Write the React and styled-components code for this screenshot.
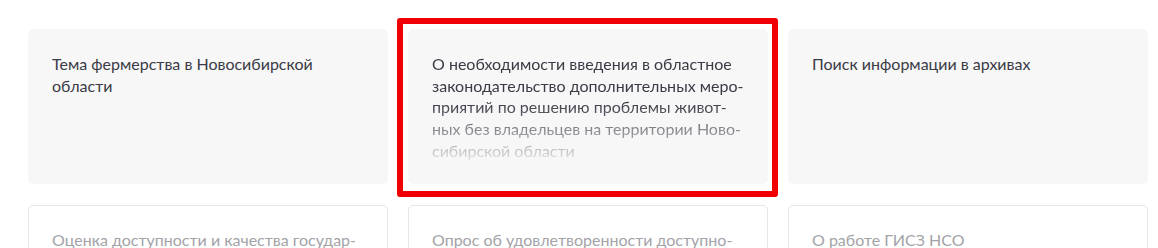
import React from "react";
import styled, { createGlobalStyle, css } from "styled-components";

const GlobalStyle = createGlobalStyle`
  html, body {
    margin: 0;
    padding: 0;
    background: #ffffff;
    font-family: Lato, "Noto Sans", "Liberation Sans", sans-serif;
  }
`;

const topics = [
  { lines: ["Тема фермерства в Новосибирской", "области"] },
  {
    lines: [
      "О необходимости введения в областное",
      "законодательство дополнительных меро-",
      "приятий по решению проблемы живот-",
      "ных без владельцев на территории Ново-",
      "сибирской области",
    ],
    selected: true,
    faded: true,
  },
  { lines: ["Поиск информации в архивах"] },
  { lines: ["Оценка доступности и качества государ-", "ственных услуг"], outlined: true },
  { lines: ["Опрос об удовлетворенности доступно-", "стью услуг"], outlined: true },
  { lines: ["О работе ГИСЗ НСО"], outlined: true },
];

const App = () => {
  return (
    <>
      <GlobalStyle />
      <StPage>
        <StGrid>
          {topics.map((topic, n) => (
            <StCard
              key={`topic${n}`}
              $selected={topic.selected}
              $outlined={topic.outlined}
            >
              <StTitle $faded={topic.faded} $muted={topic.outlined}>
                {topic.lines.map((line, i) => (
                  <span key={`line${i}`}>{line}</span>
                ))}
              </StTitle>
            </StCard>
          ))}
        </StGrid>
      </StPage>
    </>
  );
};

export default App;

const StPage = styled.div`
  padding: 29px 10px 0 28px;
`;

const StGrid = styled.div`
  display: grid;
  grid-template-columns: repeat(3, 360px);
  grid-auto-rows: 155px;
  column-gap: 20px;
  row-gap: 21px;
`;

const StCard = styled.div`
  position: relative;
  box-sizing: border-box;
  padding: 24px 24px;
  border-radius: 5px;
  background: #f7f7f8;
  ${({ $outlined }) =>
    $outlined &&
    css`
      background: #ffffff;
      border: 1px solid #e6e6e8;
      padding: 23px 23px;
    `}
  ${({ $selected }) =>
    $selected &&
    css`
      &::before {
        content: "";
        position: absolute;
        inset: -11px -10px -13px -11px;
        border: 6px solid #f00000;
        border-radius: 3px;
        pointer-events: none;
      }
    `}
`;

const StTitle = styled.div`
  display: flex;
  flex-direction: column;
  max-height: 110px;
  overflow: hidden;
  font-size: 16px;
  line-height: 21.7px;
  color: ${({ $muted }) => ($muted ? "#a3a3a8" : "#3a3b45")};
  span {
    white-space: nowrap;
  }
  ${({ $faded }) =>
    $faded &&
    css`
      -webkit-mask-image: linear-gradient(
        to bottom,
        #000 0,
        #000 50px,
        rgba(0, 0, 0, 0.1) 108px
      );
      mask-image: linear-gradient(
        to bottom,
        #000 0,
        #000 50px,
        rgba(0, 0, 0, 0.1) 108px
      );
    `}
`;
